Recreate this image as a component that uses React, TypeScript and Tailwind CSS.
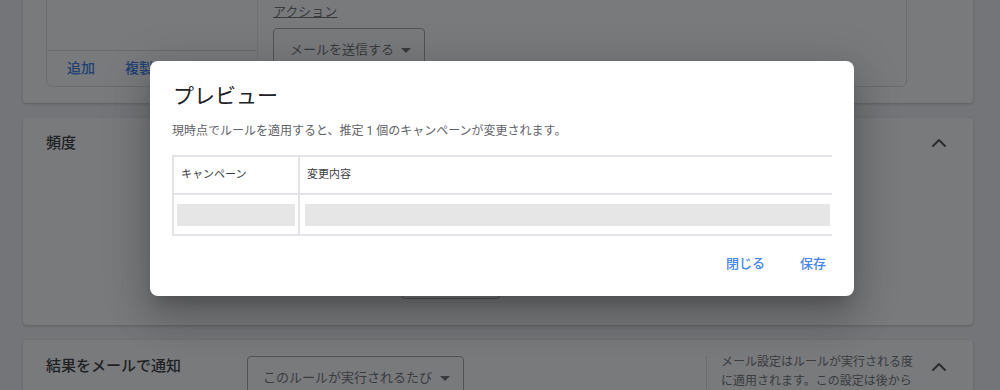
import React from "react";
import { ChevronUp } from "lucide-react";

const font = { fontFamily: "Roboto, 'Noto Sans CJK JP', 'Noto Sans', sans-serif" };

function Caret() {
  return (
    <svg width="10" height="5" viewBox="0 0 10 5" className="shrink-0">
      <path d="M0 0 L10 0 L5 5 Z" fill="#5f6368" />
    </svg>
  );
}

export default function App() {
  return (
    <div className="relative h-[390px] w-[1000px] overflow-hidden bg-[#f1f3f4]" style={font}>
      {/* underlying page */}
      <div className="flex flex-col gap-[15px] pl-[23px] pr-[27px] mt-[-40px]">
        {/* card 1 */}
        <div className="rounded bg-white shadow-[0_1px_3px_rgba(0,0,0,0.25)] px-[23px] pt-[23px] pb-[16px] w-[950px]">
          <div className="flex h-[104px] rounded-[6px] border border-[#dadce0] w-[861px]">
            <div className="flex w-[211px] flex-col border-r border-[#e8eaed]">
              <div className="h-[67px] border-b border-[#dadce0]" />
              <div className="flex flex-1 items-center gap-[30px] pl-[20px] text-[14px] font-medium text-[#1a73e8]">
                <span>追加</span>
                <span>複製</span>
              </div>
            </div>
            <div className="flex flex-col pl-[15px] pt-[4px]">
              <span className="text-[13px] leading-[18px] text-[#5f6368] underline mt-[15px]">アクション</span>
              <div className="mt-[7px] flex h-[44px] w-[152px] items-center gap-[7px] whitespace-nowrap rounded border border-[#9aa0a6] pl-[16px] text-[13px] text-[#5f6368]">
                <span>メールを送信する</span>
                <Caret />
              </div>
            </div>
          </div>
        </div>
        {/* card 2 */}
        <div className="flex h-[207px] w-[950px] flex-col rounded bg-white shadow-[0_1px_3px_rgba(0,0,0,0.25)] pl-[23px] pr-[22px] pt-[13px] pb-[26px]">
          <div className="flex items-center justify-between">
            <span className="text-[15px] leading-[18px] font-medium text-[#202124]">頻度</span>
            <ChevronUp size={24} strokeWidth={2} color="#3c4043" />
          </div>
          <div className="flex flex-1 items-end pl-[355px]">
            <div className="h-[36px] w-[99px] rounded border border-[#9aa0a6]" />
          </div>
        </div>
        {/* card 3 */}
        <div className="flex h-[80px] w-[950px] items-start rounded bg-white shadow-[0_1px_3px_rgba(0,0,0,0.25)] pl-[23px] pr-[22px] pt-[16px]">
          <span className="mt-[1px] w-[201px] shrink-0 text-[15px] leading-[18px] font-medium text-[#202124]">結果をメールで通知</span>
          <div className="flex h-[44px] w-[217px] shrink-0 items-center gap-[8px] whitespace-nowrap rounded border border-[#9aa0a6] pl-[15px] text-[13px] text-[#5f6368]">
            <span>このルールが実行されるたび</span>
            <Caret />
          </div>
          <div className="ml-[242px] h-[60px] shrink-0 border-l border-[#dadce0] pl-[14px] text-[12px] leading-[19px] text-[#5f6368]">
            <p className="-mt-[3px] w-[194px]">メール設定はルールが実行される度に適用されます。この設定は後から変更できます</p>
          </div>
          <div className="ml-auto mt-[-1px]">
            <ChevronUp size={24} strokeWidth={2} color="#3c4043" />
          </div>
        </div>
      </div>

      {/* scrim */}
      <div className="absolute inset-0 bg-[rgba(32,33,36,0.6)]" />

      {/* dialog */}
      <div className="absolute left-[150px] top-[61px] w-[704px] rounded-[8px] bg-white px-[22px] pt-[21px] pb-[14px] shadow-[0_11px_15px_-7px_rgba(0,0,0,0.2),0_24px_38px_3px_rgba(0,0,0,0.14),0_9px_46px_8px_rgba(0,0,0,0.12)]">
        <h2 className="pl-[1px] text-[21px] leading-[28px] font-normal text-[#202124]">プレビュー</h2>
        <p className="mt-[12px] text-[12px] leading-[18px] text-[#5f6368]">
          現時点でルールを適用すると、推定 1 個のキャンペーンが変更されます。
        </p>
        <div className="mt-[15px] w-[660px] overflow-hidden">
          <div className="w-[700px] border-2 border-[#e3e3ea]">
            <div className="flex h-[38px] border-b-2 border-[#e3e3ea] text-[11px] text-[#3c4043]">
              <div className="flex w-[126px] items-center border-r-2 border-[#e3e3ea] pl-[7px]">キャンペーン</div>
              <div className="flex flex-1 items-center pl-[7px]">変更内容</div>
            </div>
            <div className="flex h-[39px]">
              <div className="flex w-[126px] items-center border-r-2 border-[#e3e3ea] pl-[3px] pr-[3px]">
                <div className="h-[22px] w-full bg-[#e6e6e6]" />
              </div>
              <div className="flex flex-1 items-center pl-[5px]">
                <div className="h-[22px] w-[525px] bg-[#e6e6e6]" />
              </div>
            </div>
          </div>
        </div>
        <div className="mt-[10px] flex h-[36px] items-center justify-end gap-[35px] pr-[6px] text-[13px] font-medium text-[#4285f4]">
          <span>閉じる</span>
          <span>保存</span>
        </div>
      </div>
    </div>
  );
}
